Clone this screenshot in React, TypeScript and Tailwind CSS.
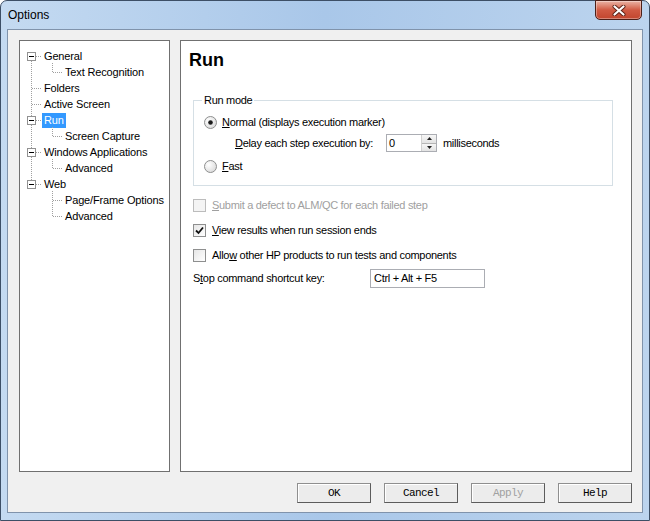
import React from 'react';

type Node = { label: string; level: 0 | 1; box?: boolean; selected?: boolean };

const TREE: Node[] = [
    { label: 'General', level: 0, box: true },
    { label: 'Text Recognition', level: 1 },
    { label: 'Folders', level: 0 },
    { label: 'Active Screen', level: 0 },
    { label: 'Run', level: 0, box: true, selected: true },
    { label: 'Screen Capture', level: 1 },
    { label: 'Windows Applications', level: 0, box: true },
    { label: 'Advanced', level: 1 },
    { label: 'Web', level: 0, box: true },
    { label: 'Page/Frame Options', level: 1 },
    { label: 'Advanced', level: 1 },
];

const cy = (i: number) => 15 + 16 * i;

// dotted connectors + expander boxes of the tree
const TreeLines: React.FC = () => {
    const dot = { stroke: '#a0a0a0', strokeDasharray: '1 1', shapeRendering: 'crispEdges' as const };
    const groups: [number, number[]][] = [
        [0, [1]],
        [4, [5]],
        [6, [7]],
        [8, [9, 10]],
    ];
    return (
        <svg className="pointer-events-none absolute left-0 top-0" width="150" height="200">
            <line x1="11.5" y1={cy(0) + 5} x2="11.5" y2={cy(8) - 4} {...dot} />
            {TREE.map((n, i) =>
                n.level === 0 ? (
                    <line key={i} x1={n.box ? 16 : 12} y1={cy(i) + 0.5} x2="22" y2={cy(i) + 0.5} {...dot} />
                ) : null
            )}
            {groups.map(([p, kids]) => (
                <g key={p}>
                    <line x1="32.5" y1={cy(p) + 7} x2="32.5" y2={cy(kids[kids.length - 1]) + 1} {...dot} />
                    {kids.map((k) => (
                        <line key={k} x1="33" y1={cy(k) + 0.5} x2="43" y2={cy(k) + 0.5} {...dot} />
                    ))}
                </g>
            ))}
            {TREE.map((n, i) =>
                n.box ? (
                    <g key={'b' + i} shapeRendering="crispEdges">
                        <rect x="7.5" y={cy(i) - 3.5} width="8" height="8" fill="#fff" stroke="#919191" />
                        <rect x="9" y={cy(i)} width="5" height="1" fill="#000" />
                    </g>
                ) : null
            )}
        </svg>
    );
};

const Radio: React.FC<{ checked?: boolean }> = ({ checked }) => (
    <svg width="13" height="13" viewBox="0 0 13 13" className="shrink-0">
        <defs>
            <radialGradient id="rg" cx="0.35" cy="0.35" r="0.8">
                <stop offset="0" stopColor="#ffffff" />
                <stop offset="1" stopColor="#d6d6d6" />
            </radialGradient>
        </defs>
        <circle cx="6.5" cy="6.5" r="6" fill="url(#rg)" stroke="#8e8f8f" />
        {checked && <circle cx="6.5" cy="6.5" r="2.3" fill="#1a1a1a" />}
    </svg>
);

const Check: React.FC<{ checked?: boolean; disabled?: boolean }> = ({ checked, disabled }) => (
    <span
        className={`flex h-[13px] w-[13px] shrink-0 items-center justify-center border ${
            disabled ? 'border-[#bcbcbc] bg-[#f4f4f4]' : 'border-[#8e8f8f] bg-gradient-to-br from-[#e6e6e6] to-[#ffffff]'
        }`}
    >
        {checked && (
            <svg width="9" height="9" viewBox="0 0 9 9">
                <path d="M1 4.5 L3.5 7 L8 1.5" fill="none" stroke="#111" strokeWidth="1.8" />
            </svg>
        )}
    </span>
);

const Btn: React.FC<{ label: string; disabled?: boolean }> = ({ label, disabled }) => (
    <button
        className={`h-[20px] w-[74px] border border-[#8f8f8f] border-b-[#5c5c5c] border-r-[#5c5c5c] bg-[#ececec] font-['Liberation_Mono',monospace] text-[11px] tracking-[-0.6px] shadow-[inset_1px_1px_0_#ffffff] ${
            disabled ? 'text-[#a0a0a0]' : 'text-black'
        }`}
    >
        {label}
    </button>
);

export default function App() {
    return (
        <div className="h-[521px] w-[650px] overflow-hidden font-['Liberation_Sans',Arial,sans-serif] text-[11px] text-black">
            <div className="relative flex h-full flex-col rounded-t-[7px] border border-[#3d4f66] bg-gradient-to-r from-[#c4daf1] via-[#a9c7e9] to-[#bcd4ee]">
                {/* Title bar */}
                <div className="flex h-[28px] shrink-0 items-center pl-[7px] text-[12px] text-black">Options</div>
                <div className="absolute right-[7px] top-[-1px] flex h-[20px] w-[47px] items-center justify-center rounded-b-[5px] border border-[#4c2019] bg-gradient-to-b from-[#e9b3a5] via-[#d05a43] to-[#c2452d] shadow-[inset_0_0_0_1px_rgba(255,255,255,0.35)]">
                    <svg width="14" height="11" viewBox="0 0 14 11">
                        <path d="M2.5 1.5 L11.5 9.5 M11.5 1.5 L2.5 9.5" stroke="#5a2015" strokeWidth="4" strokeLinecap="round" />
                        <path d="M2.5 1.5 L11.5 9.5 M11.5 1.5 L2.5 9.5" stroke="#ffffff" strokeWidth="2.2" strokeLinecap="round" />
                    </svg>
                </div>

                {/* Client area */}
                <div className="mx-[6px] mb-[7px] flex flex-1 flex-col border border-[#8093ab] bg-[#f0f0f0]">
                    <div className="mx-[11px] mr-[10px] mt-[10px] flex h-[432px] gap-[10px]">
                        {/* Tree */}
                        <div className="relative w-[151px] border border-[#707070] bg-white pt-[7px] tracking-[-0.15px]">
                            <TreeLines />
                            {TREE.map((n, i) => (
                                <div key={i} className={`flex h-[16px] items-center ${n.level === 0 ? 'pl-[22px]' : 'pl-[43px]'}`}>
                                    <span
                                        className={`h-[15px] px-[2px] leading-[15px] ${
                                            n.selected ? 'bg-[#3399ff] text-white' : ''
                                        }`}
                                    >
                                        {n.label}
                                    </span>
                                </div>
                            ))}
                        </div>

                        {/* Run page */}
                        <div className="flex flex-1 flex-col border border-[#707070] bg-white tracking-[-0.3px]">
                            <div className="pl-[8px] pt-[8px] text-[18px] font-bold leading-[22px] tracking-normal">Run</div>
                            <div className="ml-[12px] mr-[18px] flex flex-col">
                                <fieldset className="mt-[23px] border border-[#d5dfe5] px-[10px] pb-[11px] pt-[7px]">
                                    <legend className="ml-[-2px] px-[2px] leading-[13px]">Run mode</legend>
                                    <div className="flex h-[16px] items-center gap-[5px]">
                                        <Radio checked />
                                        <span>
                                            <u>N</u>ormal (displays execution marker)
                                        </span>
                                    </div>
                                    <div className="mt-[4px] flex items-center pl-[31px]">
                                        <span className="w-[151px]">
                                            <u>D</u>elay each step execution by:
                                        </span>
                                        <div className="flex h-[18px] w-[51px] items-stretch border border-[#abadb3] bg-white">
                                            <span className="flex-1 pl-[2px] leading-[16px]">0</span>
                                            <div className="flex w-[15px] flex-col border-l border-[#d0d0d0]">
                                                <div className="flex flex-1 items-center justify-center border-b border-[#b5b5b5] bg-gradient-to-b from-[#f6f6f6] to-[#e3e3e3]">
                                                    <svg width="5" height="3" viewBox="0 0 5 3">
                                                        <path d="M0 3 L2.5 0 L5 3 Z" fill="#222" />
                                                    </svg>
                                                </div>
                                                <div className="flex flex-1 items-center justify-center bg-gradient-to-b from-[#f6f6f6] to-[#e3e3e3]">
                                                    <svg width="5" height="3" viewBox="0 0 5 3">
                                                        <path d="M0 0 L2.5 3 L5 0 Z" fill="#222" />
                                                    </svg>
                                                </div>
                                            </div>
                                        </div>
                                        <span className="ml-[6px]">milliseconds</span>
                                    </div>
                                    <div className="mt-[6px] flex h-[16px] items-center gap-[5px]">
                                        <Radio />
                                        <span>
                                            <u>F</u>ast
                                        </span>
                                    </div>
                                </fieldset>

                                <div className="mt-[11px] flex h-[16px] items-center gap-[6px] text-[#a0a0a0]">
                                    <Check disabled />
                                    <span>
                                        <u>S</u>ubmit a defect to ALM/QC for each failed step
                                    </span>
                                </div>
                                <div className="mt-[9px] flex h-[16px] items-center gap-[6px]">
                                    <Check checked />
                                    <span>
                                        <u>V</u>iew results when run session ends
                                    </span>
                                </div>
                                <div className="mt-[9px] flex h-[16px] items-center gap-[6px]">
                                    <Check />
                                    <span>
                                        Allo<u>w</u> other HP products to run tests and components
                                    </span>
                                </div>
                                <div className="mt-[6px] flex items-center">
                                    <span className="w-[177px]">
                                        S<u>t</u>op command shortcut key:
                                    </span>
                                    <div className="h-[19px] w-[115px] border border-[#abadb3] bg-white pl-[3px] leading-[17px]">
                                        Ctrl + Alt + F5
                                    </div>
                                </div>
                            </div>
                        </div>
                    </div>

                    {/* Buttons */}
                    <div className="mr-[10px] mt-[11px] flex justify-end gap-[13px]">
                        <Btn label="OK" />
                        <Btn label="Cancel" />
                        <Btn label="Apply" disabled />
                        <Btn label="Help" />
                    </div>
                </div>
            </div>
        </div>
    );
}
